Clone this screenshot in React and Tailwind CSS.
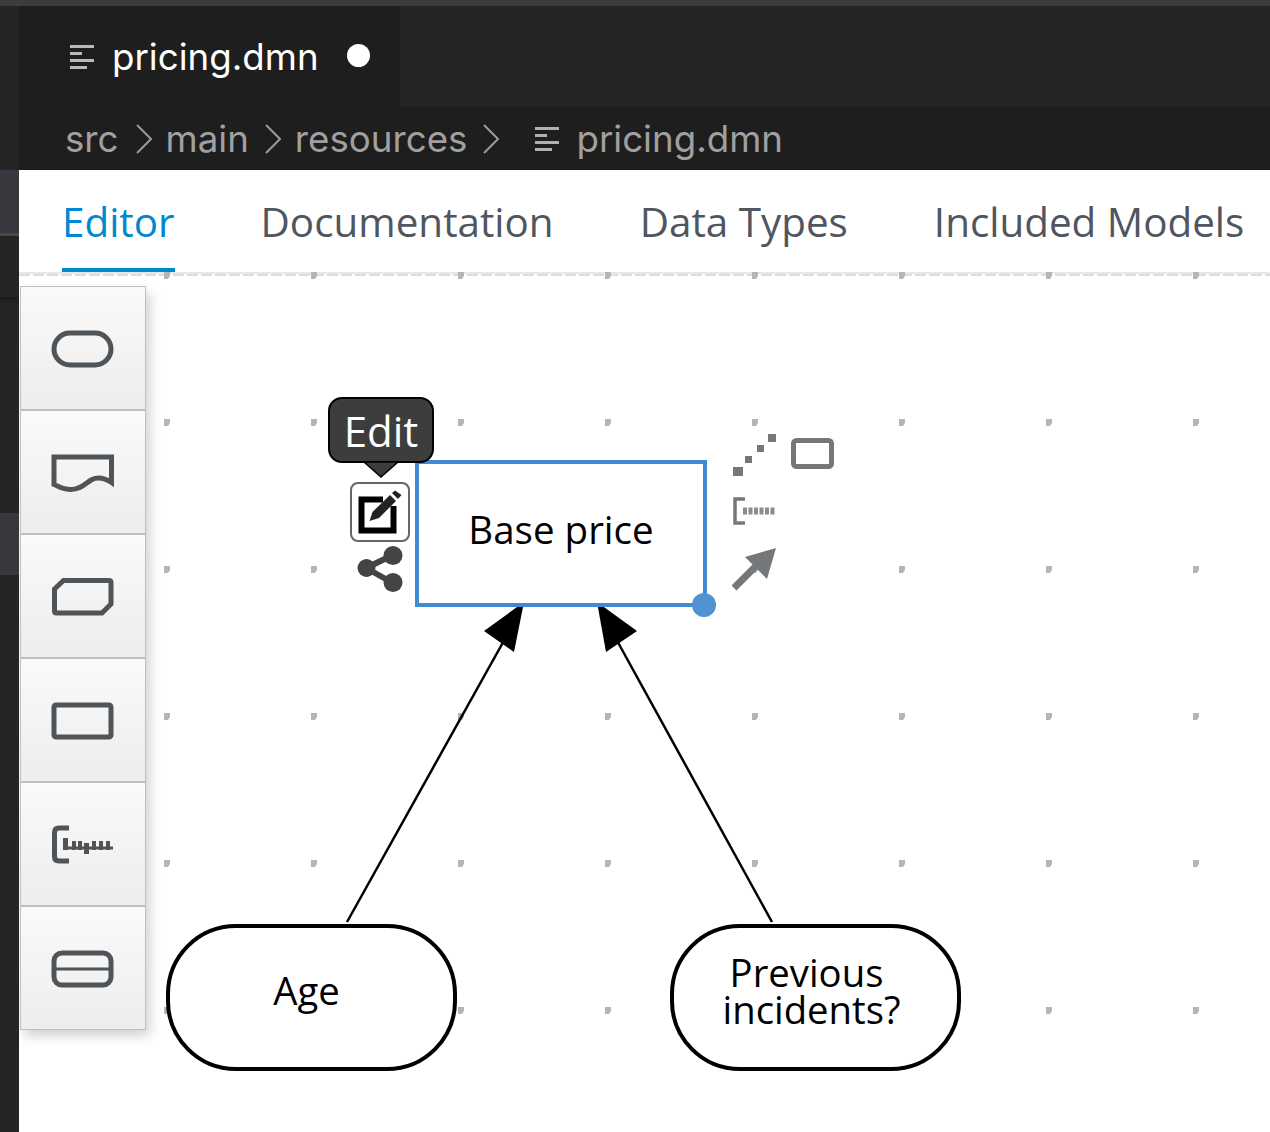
const dotXs = [167, 314, 461, 608, 755, 902, 1049, 1196];
const dotYs = [275, 422, 569, 716, 863, 1010];
const rulerTicks = [
  [12, 14, 5, 12],
  [21, 17, 4, 9],
  [27, 17, 4, 9],
  [33, 19, 5, 11],
  [41, 17, 4, 9],
  [48, 17, 4, 9],
  [55, 17, 4, 9],
];

function FileIcon({ className }) {
  return (
    <svg width="24" height="26" viewBox="0 0 24 26" className={className}>
      <g fill="currentColor">
        <rect x="0" y="1" width="24" height="3" />
        <rect x="0" y="8" width="12" height="3" />
        <rect x="0" y="15" width="24" height="3" />
        <rect x="0" y="22" width="17" height="3" />
      </g>
    </svg>
  );
}

function Chevron({ className }) {
  return (
    <svg width="16" height="32" viewBox="0 0 16 32" fill="none" stroke="#9a9a9a" strokeWidth="2" className={className}>
      <path d="M1 2L15 16L1 30" />
    </svg>
  );
}

function PaletteIcon({ children }) {
  return (
    <button className="flex h-[124px] w-full items-center justify-center border border-[#bfbfbf] bg-gradient-to-b from-[#fafafa] to-[#ededed] pt-[3px]">
      <svg width="64" height="44" viewBox="0 0 64 44" fill="none" stroke="#4f5459" strokeWidth="5">
        {children}
      </svg>
    </button>
  );
}

function Palette() {
  return (
    <div className="absolute left-[1px] top-[14px] flex w-[126px] flex-col rounded-sm shadow-[4px_6px_12px_rgba(0,0,0,0.18)]">
      <PaletteIcon>
        <rect x="3" y="5" width="57" height="32" rx="16" />
      </PaletteIcon>
      <PaletteIcon>
        <path d="M3 5H60.5V30.5C53 25.5 47 24.5 41 27.5C34 31.5 30 37.5 20 37.5C12 37.5 8 34.5 3 32.5Z" />
      </PaletteIcon>
      <PaletteIcon>
        <path d="M12.5 4.5H58Q60 4.5 60 6.5V28L51 37H5.5Q3.5 37 3.5 35V13Z" />
      </PaletteIcon>
      <PaletteIcon>
        <rect x="3" y="5" width="57" height="32" rx="2" />
      </PaletteIcon>
      <PaletteIcon>
        <path d="M18 4H8Q3.5 4 3.5 8.5V32.5Q3.5 37 8 37H18" />
        <rect x="12" y="22.5" width="50" height="3" fill="#4f5459" stroke="none" />
        {rulerTicks.map(([x, y, w, h]) => (
          <rect key={x} x={x} y={y} width={w} height={h} fill="#4f5459" stroke="none" />
        ))}
      </PaletteIcon>
      <PaletteIcon>
        <rect x="3" y="5" width="57" height="32" rx="8" />
        <path d="M3 21H60" strokeWidth="3" />
      </PaletteIcon>
    </div>
  );
}

function DecisionNode({ className, children }) {
  return (
    <div
      className={`absolute flex h-[147px] w-[291px] items-center justify-center rounded-[70px] border-[4px] border-black bg-white text-center font-['Open_Sans',sans-serif] text-[38.3px] leading-[37px] text-black ${className}`}
    >
      {children}
    </div>
  );
}

function Canvas() {
  return (
    <div className="relative flex-1 overflow-hidden bg-white">
      <svg className="absolute inset-0" width="1251" height="860" viewBox="19 272 1251 860">
        <path d="M19 273H1270" stroke="#e8e8e8" strokeWidth="2" />
        <path d="M19 275H1270" stroke="#dddddd" strokeWidth="2" strokeDasharray="11 3" />
        {dotYs.map((y) =>
          dotXs.map((x) => (
            <path key={`${x}-${y}`} d={`M${x - 3} ${y - 3}h6v4l-2 3h-4z`} fill="#b5b5b5" />
          )),
        )}
        <path d="M347 922L506 637" stroke="#000" strokeWidth="2.5" />
        <path d="M772 922L615 637" stroke="#000" strokeWidth="2.5" />
        <path d="M524 602L484 631L514 652Z" fill="#000" />
        <path d="M597 602L637 631L606 652Z" fill="#000" />
      </svg>

      <Palette />

      {/* selected node */}
      <div className="absolute left-[396px] top-[188px] flex h-[147px] w-[292px] items-center justify-center border-[4px] border-[#3d8ccf] bg-white pb-[8px] font-['Open_Sans',sans-serif] text-[38.5px] text-black">
        Base price
      </div>
      <div className="absolute left-[673px] top-[321px] h-6 w-6 rounded-full bg-[#4f93d2]" />

      {/* edit toolbox */}
      <div className="absolute left-[309px] top-[125px] flex h-[66px] w-[106px] items-center justify-center rounded-[14px] border-2 border-black bg-[#3d3d3d] font-['Open_Sans',sans-serif] text-[42px] text-white">
        Edit
      </div>
      <svg className="absolute left-[345px] top-[190px]" width="34" height="16" viewBox="0 0 34 16">
        <path d="M0 0H34L17 15Z" fill="#3d3d3d" stroke="#000" strokeWidth="1.5" />
      </svg>
      <div className="absolute left-[331px] top-[210px] flex h-[60px] w-[60px] items-center justify-center rounded-lg border-2 border-[#666] bg-white">
        <svg width="44" height="44" viewBox="0 0 44 44">
          <path d="M25 9.5H3.5V40.5H35.5V16" fill="none" stroke="#000" strokeWidth="6" />
          <path d="M11.5 31L14.5 22L32 5L38 11L21 28Z" fill="#222" />
          <path d="M34 3L37 0.5L43.5 5L40 9Z" fill="#222" />
        </svg>
      </div>
      <svg className="absolute left-[338px] top-[273px]" width="46" height="48" viewBox="0 0 46 48">
        <g fill="#444">
          <circle cx="9.5" cy="23" r="9" />
          <circle cx="36" cy="10.5" r="9.5" />
          <circle cx="36" cy="37.5" r="9.5" />
        </g>
        <path d="M36 10L9 23L36 38" fill="none" stroke="#444" strokeWidth="6" />
      </svg>

      {/* create actions */}
      <svg className="absolute left-[713px] top-[160px]" width="104" height="160" viewBox="0 0 104 160">
        <g fill="#75787b">
          <rect x="1" y="35" width="10" height="9" />
          <rect x="13" y="24" width="7" height="7" />
          <rect x="25" y="13" width="7" height="7" />
          <rect x="36" y="2" width="8" height="8" />
        </g>
        <rect x="61.5" y="8.5" width="38" height="26" rx="3" fill="none" stroke="#75787b" strokeWidth="5" />
        <path d="M13 67H3V91H13" fill="none" stroke="#75787b" strokeWidth="3.5" />
        <path d="M11 79H44" stroke="#8b8e91" strokeWidth="7" strokeDasharray="4 1.5" />
        <path d="M2 156L27 131" stroke="#75787b" strokeWidth="7" />
        <path d="M44 116L35 147L13 125Z" fill="#75787b" />
      </svg>

      <DecisionNode className="left-[147px] top-[652px]">
        <span className="-translate-x-[5px] -translate-y-[7px]">Age</span>
      </DecisionNode>
      <DecisionNode className="left-[651px] top-[652px]">
        <span className="-translate-x-1 -translate-y-[7px]">
          <span className="block pr-[10px]">Previous</span>
          <span className="block">incidents?</span>
        </span>
      </DecisionNode>
    </div>
  );
}

export default function App() {
  return (
    <div className="flex h-[1132px] w-[1270px] flex-col overflow-hidden bg-[#252526] font-['Inter',sans-serif]">
      <div className="h-[6px] bg-[#3c3c3c]" />
      <div className="flex flex-1">
        <div className="flex w-[19px] flex-col">
          <div className="h-[164px] bg-[#252526]" />
          <div className="h-[63px] bg-[#37373d]" />
          <div className="h-[3px] bg-[#48484a]" />
          <div className="h-[61px] bg-[#252526]" />
          <div className="h-[8px] bg-gradient-to-b from-[#1b1b1b] to-[#252526]" />
          <div className="h-[208px] bg-[#252526]" />
          <div className="h-[62px] bg-[#37373d]" />
          <div className="flex-1 bg-[#252526]" />
        </div>
        <div className="flex min-w-0 flex-1 flex-col">
          <div className="flex h-[101px] bg-[#252526]">
            <div className="flex w-[381px] items-center bg-[#1e1e1e] pl-[51px] text-white">
              <FileIcon className="text-[#b9b9b9]" />
              <span className="ml-[18px] pt-[2px] text-[36.7px] leading-none">pricing.dmn</span>
              <span className="mb-[2px] ml-[28px] h-[23px] w-[23px] rounded-full bg-white" />
            </div>
          </div>
          <div className="flex h-[63px] items-center bg-[#1e1e1e] pl-[46px] text-[36.7px] text-[#a0a0a0]">
            <span>src</span>
            <Chevron className="ml-[17px] mr-[14px]" />
            <span>main</span>
            <Chevron className="ml-[16px] mr-[14px]" />
            <span>resources</span>
            <Chevron className="ml-[16px]" />
            <FileIcon className="ml-[36px] text-[#b0b0b0]" />
            <span className="ml-[17px]">pricing.dmn</span>
          </div>
          <div className="flex h-[102px] items-start gap-[86px] bg-white pl-[43px] font-['Open_Sans',sans-serif] text-[40.4px] text-[#4f5660]">
            <div className="flex h-[104px] items-center border-b-[6px] border-[#0088ce] pt-[7px] text-[#0088ce]">Editor</div>
            <div className="flex h-[104px] items-center pt-[1px]">Documentation</div>
            <div className="flex h-[104px] items-center pt-[1px]">Data Types</div>
            <div className="flex h-[104px] items-center pt-[1px]">Included Models</div>
          </div>
          <Canvas />
        </div>
      </div>
    </div>
  );
}
